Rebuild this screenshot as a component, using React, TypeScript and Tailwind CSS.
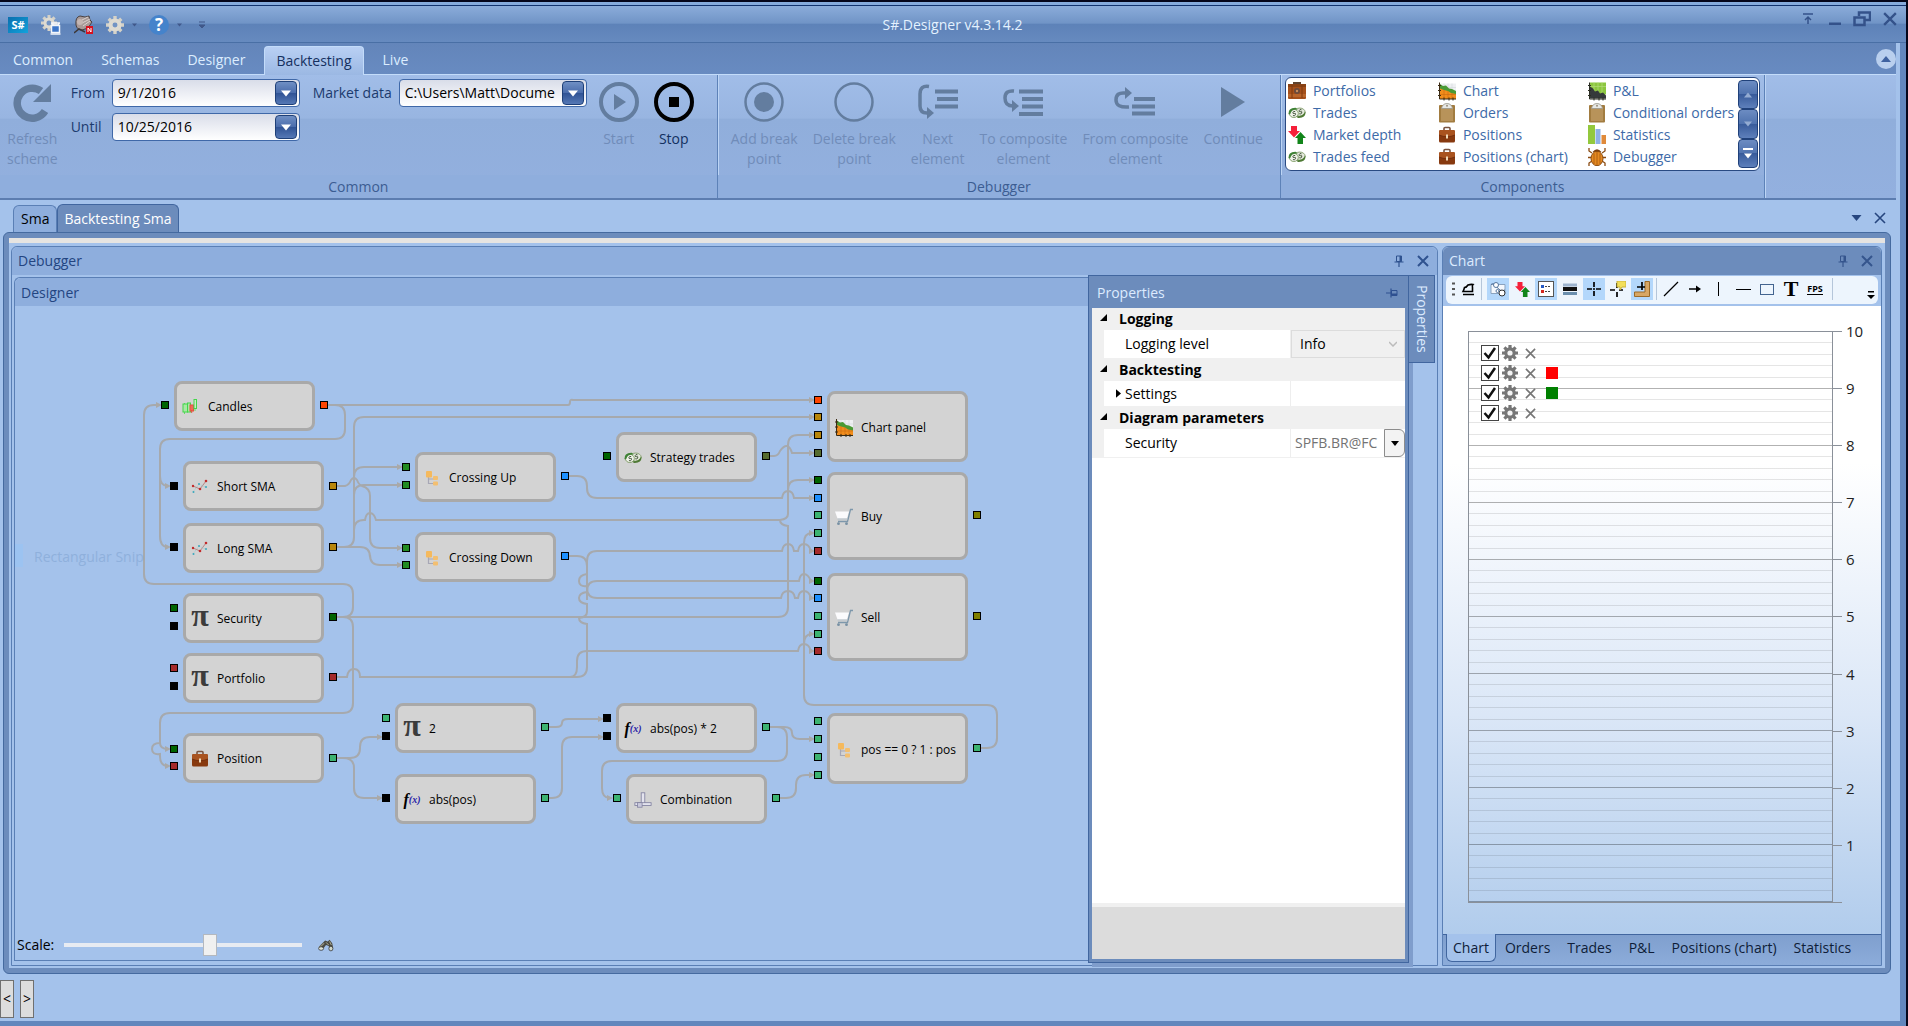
import { useState } from "react";
import type { ReactNode } from "react";

type IconProps = { className?: string };

/* ---------- small drawings ---------- */

const Briefcase = ({ className = "w-[18px] h-[18px]" }: IconProps) => (
  <svg viewBox="0 0 18 18" className={className}>
    <path d="M6 4.5V2.5q0-1 1-1h4q1 0 1 1v2" fill="none" stroke="#7a5440" strokeWidth="1.6" />
    <rect x="1" y="4" width="16" height="12.500" rx="1.5" fill="#87390f" />
    <path d="M1 9V5.500Q1 4 2.500 4h13Q17 4 17 5.500V9q-8 3-16 0z" fill="#a9531f" />
    <path d="M1 9q8 3.500 16 0" stroke="#6d2c0d" strokeWidth=".8" fill="none" />
    <rect x="8" y="8.500" width="2" height="4" fill="#f0d9b8" />
  </svg>
);

const Case = () => (
  <svg viewBox="0 0 18 18" className="w-[18px] h-[18px]">
    <rect x="5" y="0" width="8" height="3" fill="#5e4330" />
    <rect x="0" y="2" width="18" height="15" rx="1" fill="#a5501b" />
    <rect x="0" y="2" width="18" height="3" fill="#8a4214" />
    <rect x="0" y="12" width="18" height="3" fill="#b9652b" />
    <path d="M4 3v13M14 3v13" stroke="#7e3a10" />
    <circle cx="9" cy="9" r="3" fill="#6b4a3c" />
    <circle cx="9" cy="9" r="1.2" fill="#c98c5b" />
  </svg>
);

const Trades = ({ className = "w-[20px] h-[18px]" }: IconProps) => (
  <svg viewBox="0 0 20 18" className={className}>
    <ellipse cx="13" cy="8" rx="6" ry="4.500" fill="#e4e9dc" stroke="#7f9a68" strokeWidth="1" />
    <path d="M19.500 8q0 7-8.500 6.500l-2-2q7 .5 10-5z" fill="#4f7a35" />
    <ellipse cx="6.500" cy="9.500" rx="5" ry="4.500" fill="#f0f2ea" stroke="#7c9a63" strokeWidth="1" />
    <path d="M.5 10.500Q0 3 8.500 3.200l2.500 2Q4 4.500 2.500 10z" fill="#3f8236" />
    <path d="M8 7.500q-2-1-2.500.7t1.500 1.300 1.200 1.500-2.700.8M15 5.500q-2-1-2.500.7t1.500 1.300 1.200 1.500-2.700.8" stroke="#34472b" strokeWidth="1" fill="none" />
  </svg>
);

const Arrows = ({ className = "w-[18px] h-[18px]" }: IconProps) => (
  <svg viewBox="0 0 18 18" className={className}>
    <path d="M3 0h6v5h3L6 11.500 0 5h3z" fill="#f5203a" />
    <path d="M12.500 6l5.500 6h-3v6H9.500v-6H7z" fill="#12851a" />
  </svg>
);

const AreaChart = ({ className = "w-[19px] h-[19px]" }: IconProps) => (
  <svg viewBox="0 0 18 18" className={className}>
    <path d="M2 1h16v12H2z" fill="#eef0f2" />
    <path d="M2 5h16M2 9h16M6 1v15M10 1v15M14 1v15" stroke="#d3d6dc" strokeWidth=".6" />
    <path d="M2 1.500l3 2 3-.5 3 3 3 .5 4 2V15H2z" fill="#4a9a35" />
    <path d="M2 6l4 1.500 4 1 3 2 5 1v5H2z" fill="#f18d1c" />
    <path d="M6 7.500v9M10 8.500v8M14 10.500v6M2 12h16" stroke="#c9690f" strokeWidth=".6" />
    <path d="M1.500 0v16.500H18M0 3h3M0 8h3M0 13h3M6 18v-3M11 18v-3M15 18v-3" stroke="#3b2a12" strokeWidth="1" fill="none" />
  </svg>
);

const ProfitChart = () => (
  <svg viewBox="0 0 18 18" className="w-[19px] h-[19px]">
    <path d="M2 0h16v12H2z" fill="#8cc63f" />
    <path d="M6 0v12M10 0v12M14 0v12M2 4h16" stroke="#b4dd7a" strokeWidth=".7" />
    <path d="M2 4l3 2 2 3 3-1 2 3 3-1 3 3v3H2z" fill="#35393a" />
    <path d="M1.500 0v16.500H18M0 3h3M0 8h3M0 13h3M6 18v-3M11 18v-3M15 18v-3" stroke="#2a2d22" strokeWidth="1" fill="none" />
  </svg>
);

const Clipboard = () => (
  <svg viewBox="0 0 18 20" className="w-[18px] h-[20px]">
    <rect x="1" y="2" width="16" height="17.500" rx="1" fill="#a27c40" />
    <rect x="3" y="4" width="12" height="14" fill="#b8935a" />
    <path d="M3.500 5.500q1-5 5.500-5t5.500 5z" fill="#e6e8e6" stroke="#99958a" strokeWidth=".8" />
    <circle cx="9" cy="2.800" r="1" fill="#9b8f7a" />
  </svg>
);

const Bars = () => (
  <svg viewBox="0 0 18 20" className="w-[18px] h-[20px]">
    <rect x="0" y="0" width="7" height="19" fill="#93c83d" />
    <rect x="7.500" y="4" width="5" height="15" fill="#8fb1e6" />
    <rect x="13.500" y="10" width="4.500" height="9" fill="#e08a3a" />
  </svg>
);

const Bug = () => (
  <svg viewBox="0 0 18 18" className="w-[18px] h-[18px]">
    <path d="M4 5L1 3V0M14 5l3-2V0M3 9.500H0M15 9.500h3M4 13l-3 2v3M14 13l3 2v3" stroke="#8a4a10" strokeWidth="1.300" fill="none" />
    <path d="M4.500 4Q9-1.500 13.500 4z" fill="#7a3f10" />
    <ellipse cx="9" cy="10.500" rx="6" ry="7.200" fill="#e58a22" stroke="#8a4a10" />
    <path d="M9 4v13.500M6 5.500v10.500M12 5.500v10.500" stroke="#a85c12" strokeWidth=".9" />
  </svg>
);

const Candles = () => (
  <svg viewBox="0 0 18 18" className="w-[18px] h-[18px]">
    <path d="M2.500 5v11M13 1v12" stroke="#64dd64" />
    <rect x="1" y="6" width="4.500" height="8" fill="#a9e8a4" stroke="#43d64a" />
    <rect x="5.500" y="5" width="3" height="9" fill="#a9e8a4" stroke="#43d64a" />
    <rect x="8" y="7" width="3.500" height="6" fill="#f06a5a" stroke="#e2503e" />
    <path d="M9.700 12v3" stroke="#e2503e" />
    <rect x="12" y="1.500" width="2.500" height="9" fill="#c9ecc4" stroke="#43d64a" />
  </svg>
);

const Dots = () => (
  <svg viewBox="0 0 18 18" className="w-[18px] h-[18px]">
    <path d="M2 8l7 3 6-8" fill="none" stroke="#b0706c" strokeWidth=".8" />
    <path d="M2 14l6-8 6 3" fill="none" stroke="#9fc6cf" strokeWidth=".8" strokeDasharray="2 1" />
    <g fill="#c22a2a"><circle cx="2" cy="8" r="1.200" /><circle cx="9" cy="11" r="1.300" /><circle cx="15" cy="3" r="1.300" /></g>
    <g fill="#3aa9bd"><circle cx="2.500" cy="14" r="1" /><circle cx="8" cy="6" r="1" /><circle cx="15" cy="9" r="1" /></g>
  </svg>
);

const Tree = () => (
  <svg viewBox="0 0 18 18" className="w-[18px] h-[18px]">
    <path d="M5.500 8v6.500h6M5.500 10H11" stroke="#a7a7b5" fill="none" strokeWidth="1.200" />
    <rect x="3" y="2" width="6" height="6.500" rx="1" fill="#f5b95c" />
    <rect x="10" y="7" width="5" height="4" rx="1" fill="#f3bf70" />
    <rect x="10" y="12.500" width="5" height="4" rx="1" fill="#f3bf70" />
  </svg>
);

const Cart = () => (
  <svg viewBox="0 0 18 18" className="w-[18px] h-[18px]">
    <path d="M0 3.500h14l-2 7H2.500z" fill="#fbfbfd" />
    <path d="M18 1.500h-2.500L12.500 13.500H3" fill="none" stroke="#7d97ab" strokeWidth="1.300" />
    <path d="M2.500 11h10" stroke="#b6c2cc" />
    <circle cx="3.500" cy="15.700" r="1.400" fill="#7790a3" /><circle cx="11.500" cy="15.700" r="1.400" fill="#7790a3" />
  </svg>
);

const Press = () => (
  <svg viewBox="0 0 20 18" className="w-[20px] h-[18px]">
    <rect x="8" y="1" width="4" height="12" fill="#e4e4ee" stroke="#7c7c9c" strokeWidth=".9" />
    <rect x="1" y="12" width="18" height="3" fill="#e4e4ee" stroke="#7c7c9c" strokeWidth=".9" />
    <rect x="4" y="12" width="5" height="5" fill="#c9c9dc" stroke="#7c7c9c" strokeWidth=".8" />
  </svg>
);

const Pi = () => <span className="-mt-2 font-['Liberation_Serif',serif] text-[32px] leading-none font-bold text-[#3c3c3c]">π</span>;
const Fx = () => (
  <span className="flex items-center font-['Liberation_Serif',serif] text-base leading-none font-bold text-black italic">
    f<span className="text-[10px] text-[#2a1fa8]">(x)</span>
  </span>
);

const Gear = ({ className = "w-4 h-4", fill = "#767676" }: IconProps & { fill?: string }) => (
  <svg viewBox="0 0 16 16" className={className}>
    <g stroke={fill} strokeWidth="3.200">
      <path d="M8 0v16M0 8h16M2.400 2.400l11.200 11.200M13.600 2.400L2.400 13.600" />
    </g>
    <circle cx="8" cy="8" r="5.800" fill={fill} />
    <circle cx="8" cy="8" r="2.600" fill="#f4f4f4" />
  </svg>
);

const Cross = ({ className = "w-3 h-3", width = 2 }: IconProps & { width?: number }) => (
  <svg viewBox="0 0 12 12" className={className}>
    <path d="M1 1l10 10M11 1L1 11" stroke="currentColor" strokeWidth={width} />
  </svg>
);

const Pin = ({ className = "w-3 h-3" }: IconProps) => (
  <svg viewBox="0 0 12 12" className={className}>
    <path d="M3.500 1h5v5.500h-5z" fill="none" stroke="currentColor" />
    <path d="M6.500 1h2v5.500h-2z" fill="currentColor" />
    <path d="M1.500 7h9M6 7v5" stroke="currentColor" strokeWidth="1.200" />
  </svg>
);

const Down = ({ className = "w-2 h-[5px]" }: IconProps) => (
  <svg viewBox="0 0 10 6" className={className}>
    <path d="M0 0h10L5 6z" fill="currentColor" />
  </svg>
);

/* ---------- ribbon ---------- */

function TitleBar() {
  return (
    <header className="flex h-[38px] shrink-0 items-center border-t border-b border-t-[#12336f] border-b-[#496fa5] bg-[linear-gradient(#8bacda,#7094c6_48%,#5d82b8_50%,#668abf)] pt-[2px] pl-2 text-[#40588a]">
      <div className="flex flex-1 items-center">
        <span className="flex h-4 w-5 items-center justify-center bg-gradient-to-br from-[#0b6fae] to-[#13a3dc] text-[11px] font-bold text-white">S#</span>
        <button aria-label="New scheme" className="ml-[13px]">
          <svg viewBox="0 0 20 20" className="h-5 w-5">
            <g stroke="#d5d2c8" strokeWidth="3"><path d="M8 0v16M0 8h16M2.400 2.400l11.200 11.200M13.600 2.400L2.400 13.600" /></g>
            <circle cx="8" cy="8" r="5.500" fill="#dedbd2" /><circle cx="8" cy="8" r="2.500" fill="#7294c4" />
            <path d="M10 8h9M10.500 8l1.500 2h5l1.500-2" stroke="#f2f5fa" strokeWidth="1.500" fill="none" />
            <rect x="10.500" y="10.500" width="8" height="7" fill="#3b75c9" stroke="#f2f5fa" strokeWidth="1.500" /><path d="M9.500 19h10" stroke="#f2f5fa" strokeWidth="1.500" />
          </svg>
        </button>
        <button aria-label="Emulation" className="ml-[13px]">
          <svg viewBox="0 0 20 20" className="h-5 w-5">
            <path d="M2 10Q1 2 6 1l5 1 4-1 1 4 2 2-4 6-6 2q-5 0-6-5z" fill="#a89a98" stroke="#4b4242" />
            <path d="M8 5l6-3M8 8l8-4M9 11l7-5" stroke="#d9d2cf" /><circle cx="6" cy="7" r="3" fill="#c4b6b3" />
            <path d="M0 18l5-4 6 3" stroke="#3d3838" strokeWidth="1.500" fill="none" />
            <rect x="12" y="11" width="7" height="8" fill="#d8101e" /><path d="M14 17v-4l3 4v-4" stroke="#fff" fill="none" />
          </svg>
        </button>
        <button aria-label="Settings" className="ml-3 flex items-center gap-2">
          <svg viewBox="0 0 16 16" className="h-[18px] w-[18px]">
            <g stroke="#d5d2c8" strokeWidth="3"><path d="M8 0v16M0 8h16M2.400 2.400l11.200 11.200M13.600 2.400L2.400 13.600" /></g>
            <circle cx="8" cy="8" r="5.800" fill="#dedbd2" /><circle cx="8" cy="8" r="2.200" fill="#7294c4" />
          </svg>
          <Down className="h-1 w-[5px]" />
        </button>
        <button aria-label="Help" className="ml-3 flex items-center gap-2">
          <span className="flex h-5 w-5 items-center justify-center rounded-full bg-[#4583cb] text-[17px] font-bold text-white">?</span>
          <Down className="h-1 w-[5px]" />
        </button>
        <button aria-label="Customize toolbar" className="ml-4">
          <svg viewBox="0 0 8 8" className="h-2 w-2"><path d="M1 1h6M1 4h6L4 7z" stroke="currentColor" fill="currentColor" /></svg>
        </button>
      </div>
      <h1 className="text-sm text-[#e4f2ff]">S#.Designer v4.3.14.2</h1>
      <div className="flex flex-1 items-center justify-end gap-3 pr-[9px] pb-3 text-[#34528a]">
        <button aria-label="Stay on top"><svg viewBox="0 0 10 12" className="h-3 w-[10px]"><path d="M0 1h10M5 11V4M2 7l3-3 3 3" stroke="currentColor" strokeWidth="1.500" fill="none" /></svg></button>
        <button aria-label="Minimize" className="ml-1"><svg viewBox="0 0 12 12" className="h-3 w-3"><path d="M0 11h12" stroke="currentColor" strokeWidth="3" /></svg></button>
        <button aria-label="Restore"><svg viewBox="0 0 18 16" className="h-4 w-[18px]"><path d="M6 5V1.500h11V9h-5M1.500 6.500h10v7.500h-10z" stroke="currentColor" strokeWidth="2.500" fill="none" /></svg></button>
        <button aria-label="Close"><Cross className="h-[14px] w-[14px]" width={2} /></button>
      </div>
    </header>
  );
}

const ribbonTabs = ["Common", "Schemas", "Designer", "Backtesting", "Live"];

function RibbonTabs() {
  return (
    <nav className="flex h-8 items-end gap-[2px] border-b border-[#c3dcfa] bg-gradient-to-b from-[#6385ba] to-[#688bc1] pt-[3px] text-sm">
      {ribbonTabs.map((tab) => (
        <button
          key={tab}
          className={
            tab === "Backtesting"
              ? "mx-1 -mb-px h-[29px] rounded-t-sm border border-b-0 border-[#c3dcfa] bg-gradient-to-b from-[#b9d0f4] to-[#9bb8e3] px-[11px] text-[#15305f]"
              : "h-[29px] px-[13px] text-[#dcedff]"
          }
        >
          {tab}
        </button>
      ))}
      <button aria-label="Collapse ribbon" className="mb-[5px] ml-auto flex h-5 w-5 items-center justify-center rounded-full bg-[#b9cfee] text-[#3f62a0]">
        <Down className="h-2 w-[10px] rotate-180" />
      </button>
    </nav>
  );
}

function Combo({ label, value }: { label: string; value: string }) {
  const [text, setText] = useState(value);
  return (
    <span className="flex h-7 w-[188px] items-center rounded-sm border border-[#3f68a8] bg-gradient-to-b from-[#d9dde9] to-white py-px pr-[2px] pl-px text-black">
      <input aria-label={label} value={text} onChange={(e) => setText(e.target.value)} className="min-w-0 flex-1 bg-transparent pl-1 text-sm outline-none" />
      <button aria-label={label + " list"} className="flex h-6 w-[22px] items-center justify-center rounded-sm border border-[#1f4078] bg-[linear-gradient(#6f8fc4,#4a6cab_50%,#2f5294_50%,#5578b5)] text-white">
        <Down className="h-[7px] w-[10px]" />
      </button>
    </span>
  );
}

function Group({ title, children }: { title: string; children: ReactNode }) {
  return (
    <section className="flex flex-col border-r border-[#5d82b8] shadow-[1px_0_0_#bdd5f5]">
      <div className="flex flex-1 items-start">{children}</div>
      <h2 className="h-[23px] bg-[#8faedd] text-center text-sm leading-6 text-[#3c5d92]">{title}</h2>
    </section>
  );
}

function BigButton({ icon, lines, active = false }: { icon: ReactNode; lines: string[]; active?: boolean }) {
  return (
    <button
      disabled={!active}
      className={"flex flex-col items-center px-[7px] pt-[7px] text-sm leading-5 " + (active ? "text-[#12305f]" : "text-[#708cb9]")}
    >
      <span className={"mb-[7px] flex h-10 items-center " + (active ? "text-black" : "text-[#637d9f]")}>{icon}</span>
      {lines.map((line) => (
        <span key={line}>{line}</span>
      ))}
    </button>
  );
}

const Ring = ({ children }: { children?: ReactNode }) => (
  <svg viewBox="0 0 40 40" className="h-10 w-10">
    <circle cx="20" cy="20" r="18.500" fill="none" stroke="currentColor" strokeWidth="2.500" />
    {children}
  </svg>
);

const HeavyRing = ({ children }: { children?: ReactNode }) => (
  <svg viewBox="0 0 40 40" className="h-10 w-10">
    <circle cx="20" cy="20" r="18" fill="none" stroke="currentColor" strokeWidth="4" />
    {children}
  </svg>
);

const Lines = ({ d, bars, head }: { d: string; bars: string; head: string }) => (
  <svg viewBox="0 0 42 40" className="h-10 w-[42px]">
    <path d={bars} stroke="currentColor" strokeWidth="4" />
    <path d={d} stroke="currentColor" strokeWidth="3.500" fill="none" />
    <path d={head} fill="currentColor" />
  </svg>
);

const gallery: [string, ReactNode][] = [
  ["Portfolios", <Case />],
  ["Chart", <AreaChart />],
  ["P&L", <ProfitChart />],
  ["Trades", <Trades />],
  ["Orders", <Clipboard />],
  ["Conditional orders", <Clipboard />],
  ["Market depth", <Arrows />],
  ["Positions", <Briefcase />],
  ["Statistics", <Bars />],
  ["Trades feed", <Trades />],
  ["Positions (chart)", <Briefcase />],
  ["Debugger", <Bug />],
];

function Ribbon() {
  return (
    <div className="flex h-[125px] border-b-2 border-[#5c7db0] bg-[linear-gradient(#a1bde8,#98b5e1_35%,#90aedb_36%,#93b0df)]">
      <Group title="Common">
        <BigButton
          icon={
            <svg viewBox="0 0 40 40" className="h-10 w-10">
              <path d="M33 29A15 15 0 1 1 29 9" fill="none" stroke="currentColor" strokeWidth="7.500" />
              <path d="M39 2v18H21z" fill="currentColor" />
            </svg>
          }
          lines={["Refresh", "scheme"]}
        />
        <div className="grid grid-cols-[41px_188px] gap-y-[6px] pt-1 pl-[6px] text-sm leading-7 text-[#1c3b6e]">
          <span>From</span>
          <Combo label="From" value="9/1/2016" />
          <span>Until</span>
          <Combo label="Until" value="10/25/2016" />
        </div>
        <div className="flex gap-[7px] pt-1 pr-[5px] pl-[13px] text-sm leading-7 text-[#1c3b6e]">
          <span>Market data</span>
          <Combo label="Market data" value={"C:\\Users\\Matt\\Docume"} />
        </div>
        <div className="flex gap-px pr-4">
          <BigButton icon={<HeavyRing><path d="M15 12l12 8-12 8z" fill="currentColor" /></HeavyRing>} lines={["Start"]} />
          <BigButton active icon={<HeavyRing><rect x="15" y="15" width="10" height="10" fill="currentColor" /></HeavyRing>} lines={["Stop"]} />
        </div>
      </Group>
      <Group title="Debugger">
        <div className="flex gap-px pr-[10px] pl-[6px]">
          <BigButton icon={<Ring><circle cx="20" cy="20" r="10" fill="currentColor" /></Ring>} lines={["Add break", "point"]} />
          <BigButton icon={<Ring />} lines={["Delete break", "point"]} />
          <BigButton
            icon={<Lines d="M12 4.500Q3 3 3 12v12q0 7 7 7" head="M10 25l7 6-7 6z" bars="M18 9.500h23M20 17h21M18 24.500h23" />}
            lines={["Next", "element"]}
          />
          <BigButton
            icon={<Lines d="M12 9Q3 8 3 16t8 8" head="M10 18l7 6-7 6z" bars="M17 9.500h24M20 17h21M20 24.500h21M17 32h24" />}
            lines={["To composite", "element"]}
          />
          <BigButton
            icon={<Lines d="M15 25Q2 26 2 18t9-7h2" head="M11 5l7 6-7 6z" bars="M20 17h21M18 24.500h23M18 31.500h23" />}
            lines={["From composite", "element"]}
          />
          <BigButton icon={<svg viewBox="0 0 24 30" className="h-[30px] w-6"><path d="M0 0l24 15L0 30z" fill="currentColor" /></svg>} lines={["Continue"]} />
        </div>
      </Group>
      <Group title="Components">
        <div className="m-[2px] mr-1 ml-1 flex w-[475px] rounded-md border border-[#294a82] bg-white p-[2px] text-sm">
          <div className="grid w-[450px] grid-cols-[150px_150px_150px] gap-y-0">
            {gallery.map(([name, icon]) => (
              <button key={name} className="flex h-[22px] items-center gap-[7px] whitespace-nowrap text-[#3d6aa8]">
                <span className="flex w-[18px] justify-center">{icon}</span>
                {name}
              </button>
            ))}
          </div>
          <div className="flex w-5 flex-col">
            {["Up", "Down", "More"].map((dir) => (
              <button
                key={dir}
                aria-label={dir}
                className="flex w-5 flex-1 flex-col items-center justify-center gap-[3px] rounded-sm border border-[#20417a] bg-[linear-gradient(#6c8cc2,#4f72ae_50%,#385b9b_50%,#5e80bb)] text-[#93abd2] last:text-white"
              >
                {dir === "More" && <span className="h-[2px] w-[10px] bg-white" />}
                <Down className={dir === "Up" ? "w-2 h-[6px] rotate-180" : "w-2 h-[6px]"} />
              </button>
            ))}
          </div>
        </div>
      </Group>
    </div>
  );
}

/* ---------- diagram ---------- */

const OX = 15;
const OY = 306;

const C = {
  dark: "#006400",
  forest: "#228b22",
  sea: "#3cb371",
  red: "#a52a2a",
  gold: "#b8860b",
  blue: "#1e90ff",
  orange: "#ff4500",
  moss: "#556b2f",
  olive: "#808000",
  black: "#000000",
};

type Node = { label: string; x: number; y: number; h: number; icon: ReactNode; inputs: [number, string][]; outputs: [number, string][] };

// port offsets are measured from the top of the node
const nodes: Node[] = [
  { label: "Candles", x: 174, y: 381, h: 50, icon: <Candles />, inputs: [[24, C.dark]], outputs: [[24, C.orange]] },
  { label: "Short SMA", x: 183, y: 461, h: 50, icon: <Dots />, inputs: [[25, C.black]], outputs: [[25, C.gold]] },
  { label: "Long SMA", x: 183, y: 523, h: 50, icon: <Dots />, inputs: [[24, C.black]], outputs: [[24, C.gold]] },
  { label: "Security", x: 183, y: 593, h: 50, icon: <Pi />, inputs: [[15, C.dark], [33, C.black]], outputs: [[24, C.dark]] },
  { label: "Portfolio", x: 183, y: 653, h: 50, icon: <Pi />, inputs: [[15, C.red], [33, C.black]], outputs: [[24, C.red]] },
  { label: "Position", x: 183, y: 733, h: 50, icon: <Briefcase />, inputs: [[16, C.dark], [33, C.red]], outputs: [[25, C.sea]] },
  { label: "Crossing Up", x: 415, y: 452, h: 50, icon: <Tree />, inputs: [[15, C.forest], [33, C.forest]], outputs: [[24, C.blue]] },
  { label: "Crossing Down", x: 415, y: 532, h: 50, icon: <Tree />, inputs: [[16, C.forest], [33, C.forest]], outputs: [[24, C.blue]] },
  { label: "Strategy trades", x: 616, y: 432, h: 50, icon: <Trades className="w-5 h-5" />, inputs: [[24, C.dark]], outputs: [[24, C.moss]] },
  { label: "2", x: 395, y: 703, h: 50, icon: <Pi />, inputs: [[15, C.sea], [33, C.black]], outputs: [[24, C.sea]] },
  { label: "abs(pos)", x: 395, y: 774, h: 50, icon: <Fx />, inputs: [[24, C.black]], outputs: [[24, C.sea]] },
  { label: "abs(pos) * 2", x: 616, y: 703, h: 50, icon: <Fx />, inputs: [[15, C.black], [33, C.black]], outputs: [[24, C.sea]] },
  { label: "Combination", x: 626, y: 774, h: 50, icon: <Press />, inputs: [[24, C.sea]], outputs: [[24, C.sea]] },
  { label: "Chart panel", x: 827, y: 391, h: 71, icon: <AreaChart className="w-5 h-5" />, inputs: [[9, C.orange], [26, C.gold], [44, C.gold], [62, C.moss]], outputs: [] },
  { label: "Buy", x: 827, y: 472, h: 88, icon: <Cart />, inputs: [[8, C.dark], [26, C.blue], [43, C.sea], [61, C.sea], [79, C.red]], outputs: [[43, C.olive]] },
  { label: "Sell", x: 827, y: 573, h: 88, icon: <Cart />, inputs: [[8, C.dark], [25, C.blue], [43, C.sea], [61, C.sea], [78, C.red]], outputs: [[43, C.olive]] },
  { label: "pos == 0 ? 1 : pos", x: 827, y: 713, h: 71, icon: <Tree />, inputs: [[8, C.sea], [26, C.sea], [44, C.sea], [62, C.sea]], outputs: [[35, C.sea]] },
];

const wires = [
  "M323 405H568q2 0 2-3t3-2H812",
  "M160 476q0 10 8 10",
  "M333 617H343q10 0 10-10V594q0-10-10-10H154q-10 0-10-10V415q0-10 10-10H159",
  "M160 743q0 6 8 6",
  "M354 498V427q0-10 10-10H812",
  "M354 477q0-10 10-10H400",
  "M333 547H344q10 0 10-10V495q0-10 10-10H400",
  "M362 486q8 2 8 10V538q0 10 10 10H400",
  "M333 547H360q10 0 10 10V555q0 10 10 10H400",
  "M565 476H577q10 0 10 10V488q0 10 10 10H782q1-7 6-7t6 7H812",
  "M333 617H778q10 0 10-10V526q-8-1-8-6q8-1 8-6V445q0-10 10-10H812",
  "M788 490q0-10 10-10H812",
  "M766 456H774q4 0 6-5q8-11 12 2H812",
  "M565 556H577q10 0 10 10V574q-8 1-8 7t8 5v2q0 10 10 10H781q1-7 7-7t7 7H798q1-7 6-7t7 7h1",
  "M587 600V591q0-10 10-10H799q1-7 5-7t7 7h1",
  "M333 677H347q1-8 7-8t6 8H577q10 0 10-10V624q-8-1-8-6q8-1 8-6V604q-8-1-8-6t8-6V561q0-10 10-10H782q1-7 6-7t6 7H798q1-7 6-7t7 7h1",
  "M570 677q7 0 7-10V661q0-10 10-10H798q1-7 6-7t7 7h1",
  "M977 748H987q10 0 10-10V715q0-10-10-10H814q-10 0-10-10V543q0-10 8-10",
  "M804 644q0-10 8-10",
  "M333 758H350q10 0 10-10V747q0-10 10-10H380",
  "M343 758q11 0 11 10V788q0 10 10 10H380",
  "M544 727H556q6 0 6-4t6-4H601",
  "M544 798H552q10 0 10-10V747q0-10 10-10H601",
  "M766 727H777q10 0 10 10V751q0 10-10 10H612q-10 0-10 10V788q0 10 8 10",
  "M766 727H784q8 0 8 6t8 6H812",
  "M775 798H786q10 0 10-10V785q0-10 10-10H812",
  "M160 536q0 11 8 11",
  "M343 617q10 0 10 10V703q0 10-10 10H170q-10 0-10 10V743q-8 0-8 6t8 5V756q0 10 8 10",
];

// stretches that run into another wire and carry no arrow head
const joints = [
  "M323 405H335q10 0 10 10V429q0 10-10 10H170q-10 0-10 10V537",
  "M333 486H345q4-1 6-6 3-4 6 0 2 5 5 6",
  "M354 530q0-10 10-10H365q1-7 5-7t6 7H780",
];

function Port({ color, x, y }: { color: string; x: number; y: number }) {
  return <span className="absolute h-2 w-2 border border-black" style={{ left: x - 4 - OX, top: y - 4 - OY, backgroundColor: color }} />;
}

function Diagram() {
  return (
    <div className="relative min-h-0 flex-1 overflow-hidden">
      <svg className="absolute inset-0 h-full w-full">
        <defs>
          <marker id="head" markerWidth="8" markerHeight="8" refX="3" refY="4" orient="auto" markerUnits="userSpaceOnUse">
            <path d="M0 1l6 3-6 3z" fill="#a9a9a9" />
          </marker>
        </defs>
        <g transform={`translate(${-OX} ${-OY})`} fill="none" stroke="#a6a9ad" strokeWidth="2">
          {wires.map((d) => (
            <path key={d} d={d} markerEnd="url(#head)" />
          ))}
          {joints.map((d) => (
            <path key={d} d={d} />
          ))}
        </g>
      </svg>
      <span className="absolute top-[238px] left-0 h-[23px] w-2 bg-[#9cc3f1]" />
      <span className="absolute top-[241px] left-[19px] text-sm text-[#8fb0dc]">Rectangular Snip</span>
      {nodes.map((n) => (
        <div key={n.label}>
          <div
            className="absolute flex w-[141px] items-center gap-2 rounded-lg border-[3px] border-[#a9a9a9] bg-[#d3d3d3] pt-[2px] pl-[5px] text-xs whitespace-nowrap text-black"
            style={{ left: n.x - OX, top: n.y - OY, height: n.h }}
          >
            <span className="flex w-[18px] shrink-0 items-center justify-center">{n.icon}</span>
            {n.label}
          </div>
          {n.inputs.map(([dy, color]) => (
            <Port key={"i" + dy} color={color} x={n.x - 9} y={n.y + dy} />
          ))}
          {n.outputs.map(([dy, color]) => (
            <Port key={"o" + dy} color={color} x={n.x + 150} y={n.y + dy} />
          ))}
        </div>
      ))}
    </div>
  );
}

function ScaleBar() {
  const [scale, setScale] = useState(62);
  return (
    <div className="flex h-[30px] items-center pl-[2px] text-sm text-black">
      <label htmlFor="scale" className="w-[47px]">Scale:</label>
      <input
        id="scale"
        type="range"
        value={scale}
        onChange={(e) => setScale(Number(e.target.value))}
        className="h-[22px] w-[238px] appearance-none bg-[linear-gradient(#e7ebf2,#e7ebf2)] bg-[length:100%_4px] bg-center bg-no-repeat [&::-webkit-slider-thumb]:h-[22px] [&::-webkit-slider-thumb]:w-[14px] [&::-webkit-slider-thumb]:appearance-none [&::-webkit-slider-thumb]:border [&::-webkit-slider-thumb]:border-[#b4b8be] [&::-webkit-slider-thumb]:bg-[#f0f0f0]"
      />
      <button aria-label="Find" className="ml-4">
        <svg viewBox="0 0 18 14" className="h-[14px] w-4">
          <path d="M1 9l5-5 2-2 3 1 2-2 3 4 1 5-3 3-2-5-3-1-3 4z" fill="#4a4a42" />
          <path d="M1 10l6-5" stroke="#8e8e7c" strokeWidth="1.500" />
          <ellipse cx="3.500" cy="11" rx="2.800" ry="2" fill="#dfe3d6" stroke="#2b2b2b" strokeWidth=".8" />
          <ellipse cx="14.500" cy="11" rx="2.300" ry="2.600" fill="#cfd6c8" stroke="#2b2b2b" strokeWidth=".8" />
          <path d="M9 4l3 3M13 3l2 4" stroke="#b9b99f" />
        </svg>
      </button>
    </div>
  );
}

/* ---------- properties ---------- */

const Section = ({ title }: { title: string }) => (
  <h3 className="flex h-[22px] items-center gap-3 bg-[#f0f0f0] pl-2 text-sm font-bold text-black">
    <svg viewBox="0 0 8 8" className="-mt-1 h-[7px] w-[7px]"><path d="M8 0v8H0z" fill="#000" /></svg>
    {title}
  </h3>
);

function Row({ name, label, marker, children }: { name?: string; label: string; marker?: boolean; children?: ReactNode }) {
  return (
    <div className={"flex border-b border-l-[12px] border-[#f0f0f0] text-sm text-black " + (children ? "h-[29px]" : "h-[26px]")}>
      <label htmlFor={name} className="flex w-[187px] items-center border-r border-[#eee]">
        <span className="flex w-[21px] justify-end pr-1">
          {marker && <svg viewBox="0 0 6 10" className="h-[9px] w-[5px]"><path d="M0 0l6 5-6 5z" /></svg>}
        </span>
        {label}
      </label>
      <div className="relative flex min-w-0 flex-1">{children}</div>
    </div>
  );
}

function Properties() {
  return (
    <aside className="mb-[2px] flex w-[321px] shrink-0 flex-col border border-[#41669f] bg-[#6c8cbc] px-[3px] pb-[3px] shadow-[4px_4px_0_#7f9dcc]">
      <header className="flex h-8 shrink-0 items-center justify-between pt-px pr-[7px] pl-[5px] text-sm text-[#dcebff]">
        Properties
        <button aria-label="Auto hide" className="text-[#2e5090]"><Pin className="h-3 w-3 rotate-90" /></button>
      </header>
      <div className="flex min-h-0 flex-1 flex-col bg-white">
        <Section title="Logging" />
        <Row name="level" label="Logging level">
          <select id="level" className="w-full appearance-none border border-[#dcdcdc] bg-[#f0f0f0] pl-2 text-sm">
            <option>Info</option>
          </select>
          <svg viewBox="0 0 8 6" className="pointer-events-none absolute top-[11px] right-2 h-[6px] w-2"><path d="M0 1l4 4 4-4" fill="none" stroke="#bbb" strokeWidth="1.500" /></svg>
        </Row>
        <Section title="Backtesting" />
        <Row label="Settings" marker />
        <Section title="Diagram parameters" />
        <Row name="security" label="Security">
          <input id="security" defaultValue="SPFB.BR@FC" className="min-w-0 flex-1 pl-1 text-sm text-[#737373] outline-none" />
          <button aria-label="Security list" className="flex w-[21px] items-center justify-center rounded-r-md border border-[#8c8c8c] bg-[#f3f3f3]"><Down /></button>
        </Row>
        <div className="flex-1" />
        <div className="h-[56px] shrink-0 border-t-4 border-[#f0f0f0] bg-[#dcdcdc]" />
      </div>
    </aside>
  );
}

/* ---------- chart ---------- */

const Tool = ({ name, on = false, children }: { name: string; on?: boolean; children: ReactNode }) => (
  <button aria-label={name} className={"flex h-[22px] w-[22px] items-center justify-center " + (on ? "bg-[#b3d7fb]" : "")}>
    {children}
  </button>
);

const Glyph = ({ children }: { children: ReactNode }) => (
  <svg viewBox="0 0 16 16" className="h-4 w-4" fill="none" stroke="#000">{children}</svg>
);

function Toolbar() {
  return (
    <div className="mx-[3px] mt-px mb-[2px] flex h-7 shrink-0 items-center gap-[2px] rounded-md bg-[#edf5fd] pb-[2px] pl-[6px] text-black">
      <svg viewBox="0 0 3 14" className="h-[14px] w-[3px]"><path d="M0 1.500h3M0 7h3M0 12.500h3" stroke="#555" strokeWidth="2" /></svg>
      <Tool name="Area"><Glyph><path d="M3 10.500q1-2 1.500-4 2 0 3.500-2.500 3-1 5-.5-1 1-.5 3v4zM3 13.500h11" strokeWidth="1.600" /></Glyph></Tool>
      <span className="mr-[3px] h-[22px] w-px bg-[#b5c6da]" />
      <Tool name="Indicators" on><Glyph><path d="M1 3.500h14v9H1z" fill="#f4f8fd" stroke="#8ba3bf" /><path d="M1 3.500Q4 1 7 6t8 3" stroke="#4f6f98" /><circle cx="6" cy="4" r="2.500" fill="#fff" stroke="#56779e" /><circle cx="12" cy="12" r="3" fill="#fff" stroke="#333" /><circle cx="7.500" cy="10" r="1.500" fill="#fff" stroke="#56779e" /></Glyph></Tool>
      <Tool name="Orders"><Arrows className="h-[15px] w-[15px]" /></Tool>
      <Tool name="Legend" on><Glyph><rect x=".5" y=".5" width="15" height="15" fill="#fff" stroke="#555" /><path d="M7 5.500h6M7 10.500h6" strokeDasharray="2 1" stroke="#444" /><path d="M3 4h3v3H3z" fill="#2459c4" stroke="none" /><path d="M3 9h3v3H3z" fill="#d4281e" stroke="none" /></Glyph></Tool>
      <Tool name="Overview"><Glyph><path d="M1 4h14" stroke="#9db4cf" strokeWidth="3" /><path d="M1 8h14" stroke="#111" strokeWidth="4" /><path d="M1 12.500h14" stroke="#6b8fae" strokeWidth="3" /></Glyph></Tool>
      <Tool name="Crosshair" on><Glyph><path d="M8 1v5M8 10v5M1 8h5M10 8h5M7 8h2" strokeWidth="1.700" /></Glyph></Tool>
      <Tool name="Tooltip"><Glyph><path d="M7 2v5M7 11v5M0 9h5M9 9h4" strokeWidth="1.700" /><path d="M7 0h9v6h-4l-2 3V6H7z" fill="#f3df59" stroke="#c9b33c" /></Glyph></Tool>
      <Tool name="Ruler" on><Glyph><path d="M11 .5h4.500v15H.5V11H11z" fill="#d8a765" stroke="#9b6a28" /><path d="M8 1v8M3 6h8" strokeWidth="1.700" /></Glyph></Tool>
      <span className="mx-px h-[22px] w-px bg-[#b5c6da]" />
      <Tool name="Line"><Glyph><path d="M1 15L15 1" strokeWidth="1.200" /></Glyph></Tool>
      <Tool name="Arrow"><Glyph><path d="M2 8h8" strokeWidth="1.500" /><path d="M9 4.500l5 3.500-5 3.500z" fill="#000" stroke="none" /></Glyph></Tool>
      <Tool name="Vertical"><Glyph><path d="M7.500 1v14" /></Glyph></Tool>
      <Tool name="Horizontal"><Glyph><path d="M1 8.500h15" /></Glyph></Tool>
      <Tool name="Rectangle"><Glyph><rect x="1.500" y="3.500" width="13" height="10" stroke="#43648f" /></Glyph></Tool>
      <Tool name="Text"><span className="font-['Liberation_Serif',serif] text-[22px] leading-none font-bold">T</span></Tool>
      <Tool name="FPS"><span className="border-b border-black text-[9px] leading-[10px] font-bold">FPS</span></Tool>
      <span className="ml-1 h-[22px] w-px bg-[#b5c6da]" />
      <button aria-label="More tools" className="mt-3 mr-[3px] ml-auto"><svg viewBox="0 0 8 8" className="h-2 w-2"><path d="M1 0h6v1.500H1zM0 4h8L4 8z" /></svg></button>
    </div>
  );
}

const legend = ["transparent", "#ff0000", "#008000", "transparent"];
const levels = [10, 9, 8, 7, 6, 5, 4, 3, 2, 1];

function Plot() {
  return (
    <div className="flex min-h-0 flex-1 bg-[linear-gradient(#ffffff_25%,#dbe7f7_65%,#b1ccec)] pt-[25px] pb-[31px] pl-[25px]">
      <div className="relative flex flex-1 flex-col border border-[#8a9099]">
        {levels.map((n) => (
          <div key={n} className="flex flex-1 flex-col border-b border-black/30 last:border-0">
            {[1, 2, 3, 4].map((i) => (
              <div key={i} className="flex-1 border-b border-black/10" />
            ))}
            <div className="flex-1" />
          </div>
        ))}
        <div className="absolute top-[11px] left-3 flex flex-col">
          {legend.map((color, i) => (
            <div key={i} className="flex h-5 items-center text-[#767676]">
              <span className="relative h-4 w-[18px]">
                <input type="checkbox" defaultChecked aria-label={"Series " + (i + 1)} className="peer block h-4 w-[18px] appearance-none border border-[#444] bg-white" />
                <svg viewBox="0 0 18 16" className="pointer-events-none absolute inset-0 hidden h-4 w-[18px] peer-checked:block">
                  <path d="M3.500 8l4 4.500L14 3" fill="none" stroke="#111" strokeWidth="2.500" />
                </svg>
              </span>
              <button aria-label="Series settings" className="ml-[3px]"><Gear /></button>
              <button aria-label="Remove series" className="ml-[7px]"><Cross className="h-[11px] w-[11px]" width={1.8} /></button>
              <span className="ml-[10px] h-3 w-3" style={{ backgroundColor: color }} />
            </div>
          ))}
        </div>
      </div>
      <div className="flex w-[48px] flex-col text-[15px] leading-5 text-[#222]">
        {levels.map((n) => (
          <div key={n} className="flex flex-1 items-start">
            <span className="h-px w-[9px] bg-[#8a9099]" />
            <span className="-mt-[10px] ml-1">{n}</span>
          </div>
        ))}
        <span className="h-px w-[9px] bg-[#8a9099]" />
      </div>
    </div>
  );
}

function ChartPane() {
  return (
    <section className="flex w-[440px] shrink-0 flex-col rounded-t-md border border-[#5a7fb5]">
      <header className="flex h-7 shrink-0 items-center rounded-t-md bg-[#6c8cbc] pr-2 pl-[6px] text-sm text-[#dcebff]">
        <h2 className="flex-1">Chart</h2>
        <span className="flex gap-3 text-[#35558d]">
          <button aria-label="Auto hide chart"><Pin /></button>
          <button aria-label="Close chart"><Cross /></button>
        </span>
      </header>
      <Toolbar />
      <Plot />
      <nav className="flex h-[31px] shrink-0 gap-px border-t border-[#41669f] bg-gradient-to-b from-[#7f9fce] to-[#8cacda] text-sm text-[#0e1d38]">
        {["Chart", "Orders", "Trades", "P&L", "Positions (chart)", "Statistics"].map((tab) => (
          <button
            key={tab}
            className={tab === "Chart" ? "-mt-px ml-[3px] h-7 rounded-b-md border border-t-0 border-[#41669f] bg-[#a4c2eb] px-[6px]" : "h-[26px] px-2"}
          >
            {tab}
          </button>
        ))}
      </nav>
    </section>
  );
}

function DebuggerPane() {
  return (
    <section className="flex min-w-0 flex-1 flex-col rounded-t-md border border-[#5a7fb5]">
      <header className="flex h-7 shrink-0 items-center rounded-t-md bg-[#8eaedd] pr-2 pl-[6px] text-sm text-[#234581]">
        <h2 className="flex-1">Debugger</h2>
        <span className="flex gap-3 text-[#2f528f]">
          <button aria-label="Auto hide debugger"><Pin /></button>
          <button aria-label="Close debugger"><Cross /></button>
        </span>
      </header>
      <div className="flex min-h-0 flex-1">
        <div className="mt-[2px] mb-1 ml-[2px] flex min-w-0 flex-1 flex-col rounded-tl-md border border-r-0 border-[#5a7fb5]">
          <h3 className="h-7 shrink-0 rounded-tl-md bg-[#8eaedd] pl-[6px] text-sm leading-[30px] text-[#234581]">Designer</h3>
          <Diagram />
          <ScaleBar />
        </div>
        <Properties />
        <div className="w-[28px]">
          <button className="h-[88px] w-[26px] border border-l-0 border-[#41669f] bg-[#6c8cbc] text-sm text-[#dcebff] [writing-mode:vertical-rl]">Properties</button>
        </div>
      </div>
    </section>
  );
}

export default function App() {
  return (
    <div className="flex h-screen flex-col overflow-hidden border-t-2 border-r-2 border-[#05061a] bg-[#86abdc] pt-[3px] font-['Open_Sans','Noto_Sans',sans-serif]">
      <TitleBar />
      <div className="flex min-h-0 flex-1 flex-col border-r-[6px] border-b-[5px] border-[#6287bd] bg-[#a4c2eb]">
        <div className="mr-1 shrink-0">
          <RibbonTabs />
          <Ribbon />
        </div>
        <div className="flex h-8 shrink-0 items-end pr-[14px] pl-[13px] text-sm">
          <button className="h-[27px] rounded-t-md border border-b-0 border-[#5a7fb5] bg-[#8eaedd] px-[7px] text-black">Sma</button>
          <button className="h-7 rounded-t-md border border-b-0 border-[#41669f] bg-[#6c8cbc] px-[6px] text-white">Backtesting Sma</button>
          <span className="mb-2 ml-auto flex items-center gap-3 text-[#27467f]">
            <button aria-label="Window list"><Down className="h-[6px] w-[11px]" /></button>
            <button aria-label="Close document"><Cross width={1.6} /></button>
          </span>
        </div>
        <main className="mr-[9px] ml-[3px] flex min-h-0 flex-1 flex-col rounded-md border border-[#456a9f] bg-[#6c8cbc] p-[5px]">
          <div className="flex min-h-0 flex-1 flex-col bg-[#a4c2eb] pb-[2px]">
            <div className="mb-[3px] h-[5px] shrink-0 bg-[#e6e4e1]" />
            <div className="flex min-h-0 flex-1 gap-1 pr-[3px] pl-[2px]">
              <DebuggerPane />
              <ChartPane />
            </div>
          </div>
        </main>
        <div className="flex h-[47px] shrink-0 gap-[6px] pt-[6px] text-sm text-black">
          <button className="h-[38px] w-[14px] border border-[#707070] bg-[#ddd]">&lt;</button>
          <button className="h-[38px] w-[14px] border border-[#707070] bg-[#ddd]">&gt;</button>
        </div>
      </div>
    </div>
  );
}
